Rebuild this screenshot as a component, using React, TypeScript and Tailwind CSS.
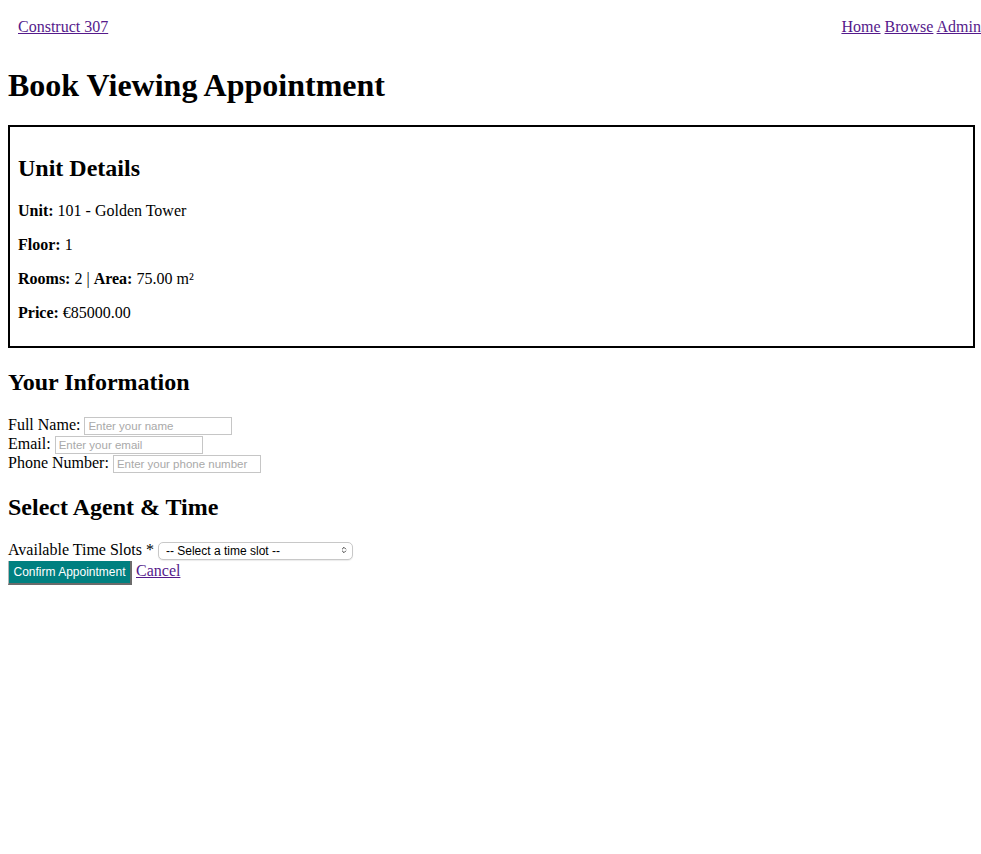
import { useState } from "react";

const UNIT = {
  number: "101",
  building: "Golden Tower",
  floor: 1,
  rooms: 2,
  area: "75.00",
  price: "85000.00",
};

const linkCls = "text-[#551a8b] underline";
const inputCls =
  "h-[18px] w-[148px] border border-[#c6c6c6] bg-white px-[3px] text-[11.5px] leading-[14px] text-black outline-none placeholder:text-[#a9a9a9] [font-family:'Liberation_Sans',Arial,sans-serif]";

function Field({ label, placeholder, value, onChange }: { label: string; placeholder: string; value: string; onChange: (v: string) => void }) {
  return (
    <div className="flex h-[19px] items-baseline gap-1">
      <label className="leading-[18px]">{label}</label>
      <input className={inputCls} placeholder={placeholder} value={value} onChange={(e) => onChange(e.target.value)} />
    </div>
  );
}

export default function App() {
  const [name, setName] = useState("");
  const [email, setEmail] = useState("");
  const [phone, setPhone] = useState("");
  const [slot, setSlot] = useState("");

  return (
    <div className="m-2 text-base leading-[18px] text-black [font-family:'Liberation_Serif','Times_New_Roman',serif]">
      {/* Top nav */}
      <header className="-mr-2 flex justify-between pl-[10px] pt-[10px] pb-[11px]">
        <a href="#" className={linkCls}>Construct 307</a>
        <nav>
          <a href="#" className={linkCls}>Home</a>{" "}
          <a href="#" className={linkCls}>Browse</a>{" "}
          <a href="#" className={linkCls}>Admin</a>
        </nav>
      </header>

      <h1 className="mt-[20px] mb-[22px] text-[32px] font-bold leading-[36px]">Book Viewing Appointment</h1>

      {/* Unit details box */}
      <div className="w-[967px] border-2 border-black px-2 pt-2 pb-2">
        <h2 className="mt-[19px] mb-5 text-2xl font-bold leading-[28px]">Unit Details</h2>
        <p className="mb-4"><b>Unit:</b> {UNIT.number} - {UNIT.building}</p>
        <p className="mb-4"><b>Floor:</b> {UNIT.floor}</p>
        <p className="mb-4"><b>Rooms:</b> {UNIT.rooms} | <b>Area:</b> {UNIT.area} m²</p>
        <p className="mb-4"><b>Price:</b> €{UNIT.price}</p>
      </div>

      <h2 className="mt-5 mb-5 text-2xl font-bold leading-[28px]">Your Information</h2>
      <Field label="Full Name:" placeholder="Enter your name" value={name} onChange={setName} />
      <Field label="Email:" placeholder="Enter your email" value={email} onChange={setEmail} />
      <Field label="Phone Number:" placeholder="Enter your phone number" value={phone} onChange={setPhone} />

      <h2 className="mt-5 mb-5 text-2xl font-bold leading-[28px]">Select Agent &amp; Time</h2>
      <div className="flex h-[20px] items-baseline gap-1">
        <label className="leading-[18px]">Available Time Slots *</label>
        <div className="relative">
          <select
            value={slot}
            onChange={(e) => setSlot(e.target.value)}
            className="h-[18px] w-[195px] appearance-none rounded-[5px] border border-[#c8c8c8] bg-white pl-[7px] text-[12px] leading-[14px] text-black shadow-[0_1px_1px_rgba(0,0,0,0.08)] [font-family:'Liberation_Sans',Arial,sans-serif]"
          >
            <option value="">-- Select a time slot --</option>
          </select>
          <svg viewBox="0 0 8 12" className="pointer-events-none absolute right-[6px] top-[5px] h-[8px] w-[6px]" fill="none" stroke="#333" strokeWidth="1.4" strokeLinecap="round" strokeLinejoin="round">
            <path d="M1.5 4.5L4 2l2.5 2.5M1.5 7.5L4 10l2.5-2.5" />
          </svg>
        </div>
      </div>
      <div className="flex items-baseline gap-1">
        <button
          type="button"
          className="h-[24px] w-[124px] border-l border-r-2 border-b-2 border-l-[#b5b5b5] border-r-[#6b6b6b] border-b-[#6b6b6b] bg-[#008080] text-[12px] text-white [font-family:'Liberation_Sans',Arial,sans-serif]"
        >
          Confirm Appointment
        </button>
        <a href="#" className={linkCls}>Cancel</a>
      </div>
    </div>
  );
}
